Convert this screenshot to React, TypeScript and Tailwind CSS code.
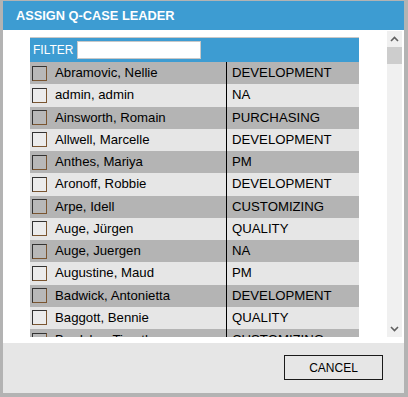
import React from "react";

const users: [string, string][] = [
  ["Abramovic, Nellie", "DEVELOPMENT"],
  ["admin, admin", "NA"],
  ["Ainsworth, Romain", "PURCHASING"],
  ["Allwell, Marcelle", "DEVELOPMENT"],
  ["Anthes, Mariya", "PM"],
  ["Aronoff, Robbie", "DEVELOPMENT"],
  ["Arpe, Idell", "CUSTOMIZING"],
  ["Auge, Jürgen", "QUALITY"],
  ["Auge, Juergen", "NA"],
  ["Augustine, Maud", "PM"],
  ["Badwick, Antonietta", "DEVELOPMENT"],
  ["Baggott, Bennie", "QUALITY"],
  ["Bardsley, Timothy", "CUSTOMIZING"],
  ["Barlow, Kendra", "PM"],
];

const Chevron = ({ up }: { up?: boolean }) => (
  <svg width="9" height="6" viewBox="0 0 9 6" className="block">
    <polyline
      points={up ? "1,5 4.5,1.5 8,5" : "1,1 4.5,4.5 8,1"}
      fill="none"
      stroke="#606060"
      strokeWidth="1.6"
    />
  </svg>
);

const App = () => {
  return (
    <div
      className="w-[408px] h-[397px] bg-[#b3b3b3] pt-[1px] pl-[3px] overflow-hidden"
      style={{ fontFamily: '"Liberation Sans", Arial, sans-serif' }}
    >
      <div className="w-[401px] h-[392px] flex flex-col bg-white">
        {/* title */}
        <div className="h-[29px] bg-[#3d9cd2] flex items-center pl-[13px] text-white font-bold text-[12.8px]">
          ASSIGN Q-CASE LEADER
        </div>

        {/* body */}
        <div className="h-[313px] flex flex-col bg-white pt-[1px]">
          <div className="h-[306px] flex">
            <div className="flex-1 overflow-hidden pl-[27px] pt-[6px]">
              <div className="w-[329px]">
                <div className="h-[25px] bg-[#3d9cd2] border-t border-[#c8c8c8] flex items-center pl-[3px] gap-[4px]">
                  <span className="text-white text-[12px]">FILTER</span>
                  <div className="w-[124px] h-[18px] bg-white border border-[#c8c8c8]" />
                </div>
                {users.map(([name, dept], i) => {
                  const dark = i % 2 === 0;
                  return (
                    <div
                      key={name}
                      className={
                        "h-[22.25px] flex items-center text-[13.2px] text-black " +
                        (dark ? "bg-[#b4b4b4]" : "bg-[#e6e6e6]")
                      }
                    >
                      <div className="w-[196px] h-full flex items-center">
                        <div
                          className={
                            "ml-[2px] w-[15px] h-[15px] border border-[#333333] border-r-[#7a5530] border-b-[#7a5530] " +
                            (dark ? "bg-[#b8b8b8]" : "bg-[#ececec]")
                          }
                        />
                        <span className="ml-[8px] whitespace-nowrap">{name}</span>
                      </div>
                      <div className="w-px h-full bg-black" />
                      <div className="flex-1 pl-[5px] whitespace-nowrap">{dept}</div>
                    </div>
                  );
                })}
              </div>
            </div>
            {/* scrollbar */}
            <div className="w-[15px] mr-[2px] bg-[#f0f0f0] flex flex-col items-center">
              <div className="h-[16px] flex items-center justify-center">
                <Chevron up />
              </div>
              <div className="w-[15px] h-[17px] bg-[#cdcdcd]" />
              <div className="flex-1" />
              <div className="h-[16px] flex items-center justify-center">
                <Chevron />
              </div>
            </div>
          </div>
        </div>

        {/* footer */}
        <div className="flex-1 bg-[#e6e6e6] flex justify-end pt-[12px] pr-[21px]">
          <button className="w-[99px] h-[25px] border border-[#1a1a1a] bg-[#e6e6e6] text-[12px] text-black">
            CANCEL
          </button>
        </div>
      </div>
    </div>
  );
};

export default App;
